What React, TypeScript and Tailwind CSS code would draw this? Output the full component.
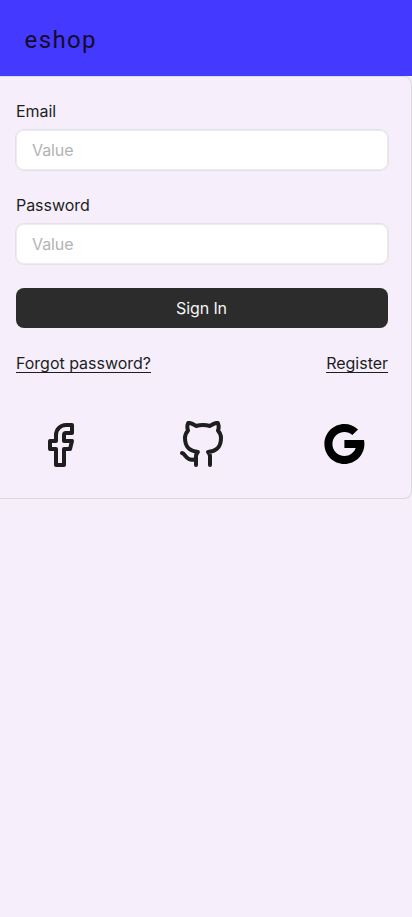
import React from "react";
import { Facebook } from "lucide-react";

function Field({ label }: { label: string }) {
  return (
    <label className="-mb-px flex flex-col gap-[7px] text-[16px] leading-[22px] tracking-[-0.05px] text-[#1e1e1e]">
      <span>{label}</span>
      <span className="-mx-px flex h-[42px] w-[374px] items-center rounded-[9px] border border-[#e5e0e8] bg-white px-4 leading-4 tracking-[-0.1px] text-[#b3b3b3] inset-shadow-[0_0_0_1px_#ececec]">Value</span>
    </label>
  );
}

export default function App() {
  return (
    <div className="min-h-[917px] w-full overflow-hidden bg-[#f6effb] font-['Inter',sans-serif]">
      <header className="flex h-[76px] items-center bg-[#4339ff] px-6 font-['Roboto',sans-serif] text-2xl tracking-[1.400px] text-[#160b28]">
        <h1 className="pt-1 pl-[0.5px]">eshop</h1>
      </header>
      <main className="flex h-[423px] flex-col gap-6 rounded-r-lg border border-l-0 border-[#d9d9d9] pt-[23px] pr-[23px] pl-4">
        <Field label="Email" />
        <Field label="Password" />
        <button className="h-10 shrink-0 rounded-lg bg-[#2c2c2c] pr-px text-[16px] leading-4 tracking-[-0.1px] text-[#f5f5f5]">Sign In</button>
        <div className="flex justify-between text-[16px] leading-[22px] tracking-[-0.02px] text-[#1e1e1e] underline decoration-[1px] underline-offset-[3px] [text-decoration-skip-ink:none]">
          <a>Forgot password?</a>
          <a>Register</a>
        </div>
        <div className="flex items-start justify-between pt-[22px] pr-5 pl-5">
          <Facebook size={48} strokeWidth={2} className="mt-px text-[#1e1e1e]" />
          <svg width="48" height="48" viewBox="0 0 24 24" fill="none" strokeWidth="2" strokeLinecap="round" strokeLinejoin="round" className="mt-px stroke-[#1e1e1e]">
            <path d="M9 19c-5 1.500-5-2.500-7-3m14 6v-3.870a3.370 3.370 0 0 0-.940-2.610c3.140-.350 6.440-1.540 6.440-7A5.440 5.440 0 0 0 20 4.770 5.070 5.070 0 0 0 19.910 1S18.730.650 16 2.480a13.380 13.380 0 0 0-7 0C6.270.650 5.090 1 5.090 1A5.070 5.070 0 0 0 5 4.770a5.440 5.440 0 0 0-1.500 3.780c0 5.420 3.300 6.610 6.440 7A3.370 3.370 0 0 0 9 18.130V22" />
          </svg>
          <svg width="48" height="48" viewBox="-0.4 0 48 48">
            <path d="M43.611 20.083H42V20H24v8h11.303c-1.649 4.657-6.080 8-11.303 8-6.627 0-12-5.373-12-12s5.373-12 12-12c3.059 0 5.842 1.154 7.961 3.039l5.657-5.657C34.046 6.053 29.268 4 24 4 12.955 4 4 12.955 4 24s8.955 20 20 20 20-8.955 20-20c0-1.341-.138-2.650-.389-3.917z" />
          </svg>
        </div>
      </main>
    </div>
  );
}
